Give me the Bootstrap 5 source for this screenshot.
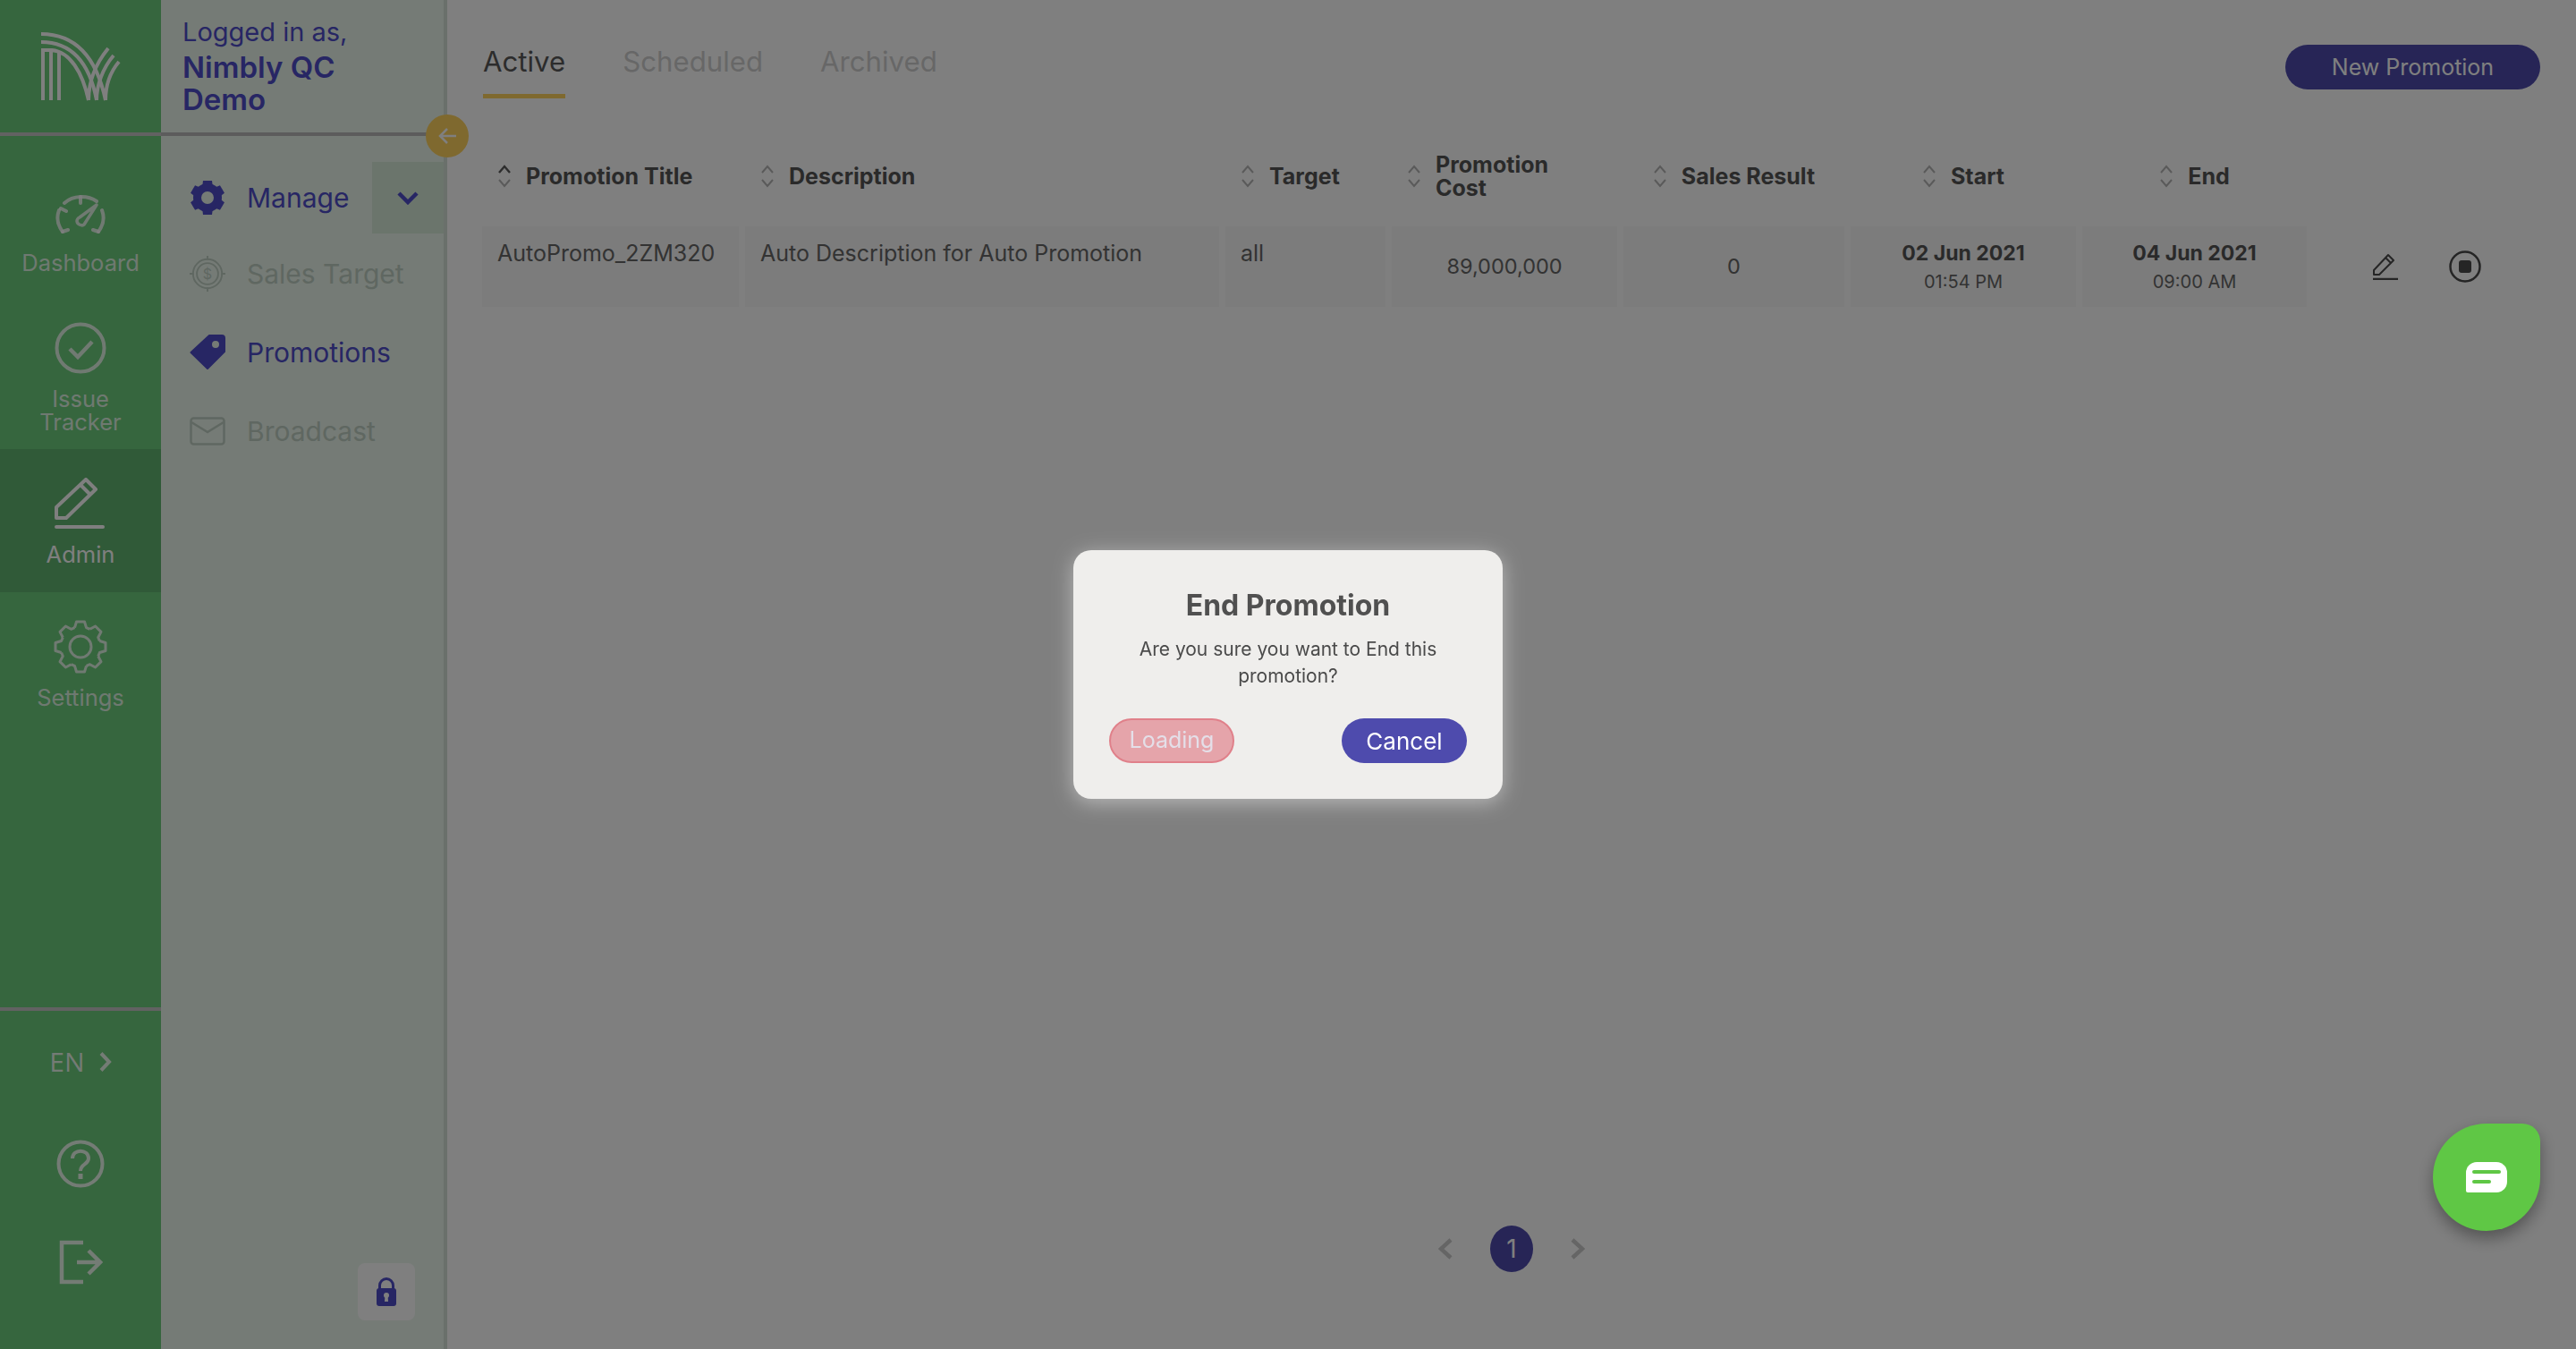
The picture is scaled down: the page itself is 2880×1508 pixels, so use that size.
<!DOCTYPE html>
<html lang="en">
<head>
    <meta charset="UTF-8">
    <meta name="viewport" content="width=device-width, initial-scale=1.0">
    <title>Promotions</title>
    <link href="https://cdn.jsdelivr.net/npm/bootstrap@5.3.0/dist/css/bootstrap.min.css" rel="stylesheet">
    <script src="https://cdn.jsdelivr.net/npm/bootstrap@5.3.0/dist/js/bootstrap.bundle.min.js"></script>
    <style>
        :root {
            --navy: #4e4cc8;
            --primary: #4e4bad;
            --green: #6ccc7c;
            --panel: #eaf6ec;
        }
        html, body { height: 100%; }
        body {
            font-family: "Inter", "Liberation Sans", sans-serif;
            background: #fff;
            overflow: hidden;
        }
        .app-shell { height: 1508px; }

        /* left green rail */
        .rail {
            width: 180px;
            background: var(--green);
            color: #fff;
        }
        .rail-head {
            height: 152px;
            border-bottom: 4px solid #c4c4c4;
        }
        .rail-item {
            height: 160px;
            padding-top: 30px;
            font-size: 25.5px;
            line-height: 26px;
            text-align: center;
            color: rgba(255, 255, 255, .8);
        }
        .rail-short { height: 152px; padding-top: 32px; margin-top: 28px; }
        .rail-tall { height: 170px; padding-top: 27px; }
        .rail-item.is-active { background: #60b470; color: #fff; }
        .rail-icon { height: 61px; margin-bottom: 14px; }
        .rail-short .rail-icon { height: 55px; }
        .rail-tall .rail-icon { height: 60px; }
        .rail-foot {
            height: 382px;
            border-top: 4px solid #c4c4c4;
            color: rgba(255, 255, 255, .85);
        }
        .lang-switch {
            font-family: "Open Sans", sans-serif;
            font-size: 30px;
            line-height: 40px;
            margin-top: 37px;
        }
        .help-ico { margin-top: 67px; }
        .exit-ico { margin-top: 58px; }

        /* second level panel */
        .side-panel {
            width: 320px;
            background: var(--panel);
            border-right: 4px solid #d4e0d6;
            color: var(--navy);
        }
        .panel-head {
            height: 152px;
            padding: 18px 20px 0 24px;
            border-bottom: 4px solid #b8b8b8;
        }
        .login-label { font-size: 29px; line-height: 36px; }
        .login-name { font-size: 33px; line-height: 36px; font-weight: 600; margin-top: 3px; }
        .panel-link {
            height: 88px;
            padding-left: 32px;
            font-size: 30px;
            gap: 24px;
        }
        .panel-link.is-off { color: #bfcfc3; }
        .panel-first { margin-top: 28px; height: 82px; }
        .panel-icon { width: 40px; flex: none; }
        .drop-box {
            width: 80px;
            height: 80px;
            background: #d6ead9;
            margin-left: auto;
        }
        .lock-box {
            width: 64px;
            height: 64px;
            background: #fff;
            border-radius: 8px;
            margin: auto 32px 32px auto;
        }
        .collapse-btn {
            position: absolute;
            left: 476px;
            top: 128px;
            width: 48px;
            height: 48px;
            border-radius: 50%;
            background: #ffd25e;
            color: #fff;
        }

        /* main area */
        .main-area { padding: 0 40px 86px 32px; min-width: 0; }
        .tab-row { height: 110px; padding-left: 8px; }
        .tab-link {
            font-size: 31.2px;
            line-height: 40px;
            color: #cfcfcf;
            padding: 49px 0 15px;
            margin-right: 64px;
            border-bottom: 5px solid transparent;
            text-decoration: none;
        }
        .tab-link.is-on { color: #585858; border-bottom-color: #ffd25e; }
        .btn-new {
            width: 285px;
            height: 50px;
            margin-top: 50px;
            padding: 2px 0 0;
            font-size: 25px;
            border: 0;
            border-radius: 25px;
            background: var(--primary);
            color: #fff;
        }
        .promo-table {
            table-layout: fixed;
            width: 2315px;
            margin-top: 31px;
            border-collapse: separate;
            border-spacing: 7px;
            color: #666;
        }
        .promo-table th {
            height: 98px;
            padding: 0 0 0 17px;
            font-size: 25px;
            line-height: 26px;
            font-weight: 700;
            color: #555;
            vertical-align: middle;
        }
        .promo-table th.is-mid { padding: 0; }
        .th-inner { display: flex; align-items: center; gap: 16px; }
        .is-mid .th-inner { justify-content: center; }
        .sort-ico { width: 16px; height: 26px; flex: none; color: #b4b4b4; }
        .promo-table td {
            height: 90px;
            padding: 0 0 0 17px;
            background: #f8f8f8;
            font-size: 25px;
            vertical-align: top;
            line-height: 60px;
            white-space: nowrap;
        }
        .promo-table td.is-mid { padding: 0; text-align: center; vertical-align: middle; line-height: 30px; font-size: 23.5px; }
        .promo-table td.no-fill { background: transparent; }
        .col-title { width: 287px; }
        .col-desc { width: 530px; }
        .col-target { width: 179px; }
        .col-cost { width: 252px; }
        .col-sales { width: 247px; }
        .col-start { width: 252px; }
        .col-end { width: 251px; }
        .date-main { font-size: 23px; font-weight: 700; color: #555; line-height: 34px; }
        .date-time { font-size: 20px; line-height: 30px; }
        .row-actions { gap: 56px; padding-left: 66px; height: 90px; color: #4a4a4a; }
        .pager { gap: 36px; padding-left: 8px; color: #cacaca; }
        .page-dot {
            width: 48px;
            height: 52px;
            border-radius: 50%;
            background: var(--primary);
            color: #fff;
            font-size: 28px;
            margin: 0 6px;
        }

        /* confirm dialog */
        .end-dialog { --bs-modal-width: 480px; }
        .end-dialog .modal-content {
            height: 278px;
            padding: 44px 40px 0;
            background: #efeeec;
            border: 0;
            border-radius: 20px;
            box-shadow: 0 4px 22px rgba(255, 255, 255, .45);
            text-align: center;
        }
        .end-title { font-size: 32px; line-height: 36px; font-weight: 700; color: #505050; margin: 0; }
        .end-text { font-size: 21px; line-height: 30px; color: #4a4a4a; margin: 16px 0 0; }
        .end-actions { margin-top: 32px; }
        .end-btn {
            width: 140px;
            height: 50px;
            padding: 0;
            font-size: 26px;
            border-radius: 25px;
        }
        .end-btn-load { background: #e5a4aa; border: 2px solid #e0808a; color: #e4dfe8; font-size: 25px; }
        .end-btn-load:disabled { background: #e5a4aa; border-color: #e0808a; color: #e4dfe8; opacity: 1; }
        .end-btn-cancel { background: var(--primary); border: 0; color: #fff; }

        .chat-bubble {
            position: fixed;
            left: 2720px;
            top: 1256px;
            width: 120px;
            height: 120px;
            border-radius: 60px 20px 60px 60px;
            background: #5fc745;
            box-shadow: 0 8px 18px rgba(0, 0, 0, .35);
            z-index: 1060;
        }
    </style>
</head>
<body>
    <svg width="0" height="0" class="position-absolute">
        <symbol id="ico-sort" viewBox="0 0 16 26">
            <path d="M2 9 8 2l6 7M2 17l6 7 6-7" fill="none" stroke="currentColor" stroke-width="2"/>
        </symbol>
        <symbol id="ico-sort-up" viewBox="0 0 16 26">
            <path d="M2 9 8 2l6 7" fill="none" stroke="#5a5a5a" stroke-width="2.4"/>
            <path d="M2 17l6 7 6-7" fill="none" stroke="currentColor" stroke-width="2"/>
        </symbol>
    </svg>

    <div class="app-shell d-flex">
        <!-- rail -->
        <aside class="rail d-flex flex-column flex-shrink-0">
            <div class="rail-head d-flex align-items-center justify-content-center">
                <svg width="90" height="78" viewBox="45 35 90 78" fill="none" stroke="#fff" stroke-width="4">
                    <path d="M46 38C85 38 108 65 118 112M46 47C80 47 100 70 108 112M46 56H58C78 58 92 80 99 112M48 56V112M57 56V112M66 58V112"/>
                    <path d="M99 112C99 90 108 70 121 54M108 112C108 95 115 76 127 62M118 112C118 98 122 82 133 69"/>
                </svg>
            </div>
            <a class="rail-item rail-short d-block text-decoration-none">
                <div class="rail-icon d-flex align-items-center justify-content-center">
                    <svg width="56" height="46" viewBox="0 0 56 46" fill="none" stroke="currentColor" stroke-width="4" stroke-linecap="round">
                        <path d="M8 42C2 34 1 26 4 18M48 42c6-8 7-16 4-24M10 10C20 1 36 1 46 8"/>
                        <path d="M28 3v7M6 16l6 3M8 42l6-2M48 42l-6-2"/>
                        <path d="M46 12 32 34c-2 2-8 0-8-4 0-2 1-3 3-4z" stroke-linejoin="round" stroke-width="3.5"/>
                    </svg>
                </div>
                Dashboard
            </a>
            <a class="rail-item rail-tall d-block text-decoration-none">
                <div class="rail-icon d-flex align-items-center justify-content-center">
                    <svg width="58" height="58" viewBox="0 0 58 58" fill="none" stroke="currentColor" stroke-width="4">
                        <circle cx="29" cy="29" r="26.5"/>
                        <path d="M17 30l9 9 16-17" stroke-width="4.5"/>
                    </svg>
                </div>
                Issue<br>Tracker
            </a>
            <a class="rail-item is-active d-block text-decoration-none">
                <div class="rail-icon d-flex align-items-center justify-content-center">
                    <svg width="58" height="58" viewBox="0 0 58 58" fill="none" stroke="currentColor" stroke-width="4">
                        <path d="M2 33 35 2l11 11-33 32H2zM29 8l11 11" stroke-linejoin="round"/>
                        <path d="M2 55h52" stroke-linecap="round"/>
                    </svg>
                </div>
                Admin
            </a>
            <a class="rail-item d-block text-decoration-none">
                <div class="rail-icon d-flex align-items-center justify-content-center">
                    <svg width="60" height="60" viewBox="0 0 60 60" fill="none" stroke="currentColor" stroke-width="3" stroke-linejoin="round">
                        <g id="gear-step"><path d="M23.5 8.6 25.5 2H34.5L36.5 8.6 40.5 10.3"/></g>
                        <use href="#gear-step" transform="rotate(45 30 30)"/>
                        <use href="#gear-step" transform="rotate(90 30 30)"/>
                        <use href="#gear-step" transform="rotate(135 30 30)"/>
                        <use href="#gear-step" transform="rotate(180 30 30)"/>
                        <use href="#gear-step" transform="rotate(225 30 30)"/>
                        <use href="#gear-step" transform="rotate(270 30 30)"/>
                        <use href="#gear-step" transform="rotate(315 30 30)"/>
                        <circle cx="30" cy="30" r="12"/>
                    </svg>
                </div>
                Settings
            </a>
            <div class="rail-foot mt-auto d-flex flex-column align-items-center">
                <div class="lang-switch d-flex align-items-center gap-3">
                    EN
                    <svg width="14" height="22" viewBox="0 0 14 22" fill="none" stroke="currentColor" stroke-width="4"><path d="M2 1.500 11 11l-9 9.500"/></svg>
                </div>
                <svg class="help-ico" width="54" height="54" viewBox="0 0 54 54" fill="none" stroke="currentColor" stroke-width="4">
                    <circle cx="27" cy="27" r="24.500"/>
                    <path d="M18 21c0-11 18-11 18 0 0 7-9 6-9 14"/>
                    <path d="M27 38v6" stroke-width="5"/>
                </svg>
                <svg class="exit-ico" width="50" height="50" viewBox="0 0 50 50" fill="none" stroke="currentColor" stroke-width="4.500">
                    <path d="M28 3H4v44h24"/>
                    <path d="M21 25h26M34 12l13 13-13 13"/>
                </svg>
            </div>
        </aside>

        <!-- second level menu -->
        <aside class="side-panel d-flex flex-column flex-shrink-0">
            <div class="panel-head">
                <div class="login-label">Logged in as,</div>
                <div class="login-name">Nimbly QC<br>Demo</div>
            </div>
            <div class="panel-link panel-first d-flex align-items-center">
                <svg class="panel-icon" height="40" viewBox="0 0 40 40" fill="currentColor">
                    <circle cx="20" cy="20" r="11.500" fill="none" stroke="currentColor" stroke-width="9"/>
                    <g id="cog-tooth"><path d="M15 1h10l1 8H14z"/></g>
                    <use href="#cog-tooth" transform="rotate(60 20 20)"/>
                    <use href="#cog-tooth" transform="rotate(120 20 20)"/>
                    <use href="#cog-tooth" transform="rotate(180 20 20)"/>
                    <use href="#cog-tooth" transform="rotate(240 20 20)"/>
                    <use href="#cog-tooth" transform="rotate(300 20 20)"/>
                </svg>
                <span>Manage</span>
                <div class="drop-box d-flex align-items-center justify-content-center">
                    <svg width="24" height="16" viewBox="0 0 24 16" fill="none" stroke="currentColor" stroke-width="4.500"><path d="M2 3l10 10L22 3"/></svg>
                </div>
            </div>
            <div class="panel-link is-off d-flex align-items-center">
                <svg class="panel-icon" height="42" viewBox="0 0 42 42" fill="none" stroke="currentColor" stroke-width="2">
                    <circle cx="21" cy="21" r="17"/>
                    <circle cx="21" cy="21" r="12.500"/>
                    <path d="M21 0v5M21 37v5M0 21h5M37 21h5"/>
                    <text x="21" y="27" text-anchor="middle" font-size="17" fill="currentColor" stroke="none">$</text>
                </svg>
                <span>Sales Target</span>
            </div>
            <div class="panel-link d-flex align-items-center">
                <svg class="panel-icon" height="40" viewBox="0 0 40 40">
                    <path d="M22 1H36a3 3 0 0 1 3 3V19L20 38 1.500 20z" fill="currentColor" stroke="currentColor" stroke-width="2" stroke-linejoin="round"/>
                    <circle cx="29" cy="11" r="4" fill="#eaf6ec"/>
                </svg>
                <span>Promotions</span>
            </div>
            <div class="panel-link is-off d-flex align-items-center">
                <svg class="panel-icon" height="32" viewBox="0 0 40 32" fill="none" stroke="currentColor" stroke-width="2.500">
                    <rect x="1.500" y="1.500" width="37" height="29" rx="3"/>
                    <path d="M2 6l18 11L38 6"/>
                </svg>
                <span>Broadcast</span>
            </div>
            <div class="lock-box d-flex align-items-center justify-content-center">
                <svg width="24" height="32" viewBox="0 0 24 32">
                    <path d="M4.500 14V9a7.500 7.500 0 0 1 15 0v5" fill="none" stroke="#4e4cc8" stroke-width="3"/>
                    <rect x="1" y="12" width="22" height="20" rx="3" fill="#4e4cc8"/>
                    <circle cx="12" cy="20" r="3" fill="#fff"/>
                    <path d="M10.500 20h3l.5 7h-4z" fill="#fff"/>
                </svg>
            </div>
        </aside>
        <div class="collapse-btn d-flex align-items-center justify-content-center">
            <svg width="20" height="18" viewBox="0 0 20 18" fill="none" stroke="currentColor" stroke-width="2.500"><path d="M20 9H2M10 1 2 9l8 8"/></svg>
        </div>

        <!-- content -->
        <main class="main-area flex-grow-1 d-flex flex-column">
            <div class="d-flex justify-content-between align-items-start">
                <nav class="tab-row d-flex">
                    <a class="tab-link is-on">Active</a>
                    <a class="tab-link">Scheduled</a>
                    <a class="tab-link">Archived</a>
                </nav>
                <button class="btn btn-new" type="button">New Promotion</button>
            </div>

            <table class="promo-table">
                <colgroup>
                    <col class="col-title"><col class="col-desc"><col class="col-target"><col class="col-cost"><col class="col-sales"><col class="col-start"><col class="col-end"><col>
                </colgroup>
                <thead>
                    <tr>
                        <th><div class="th-inner"><svg class="sort-ico"><use href="#ico-sort-up"/></svg>Promotion Title</div></th>
                        <th><div class="th-inner"><svg class="sort-ico"><use href="#ico-sort"/></svg>Description</div></th>
                        <th><div class="th-inner"><svg class="sort-ico"><use href="#ico-sort"/></svg>Target</div></th>
                        <th><div class="th-inner"><svg class="sort-ico"><use href="#ico-sort"/></svg><span>Promotion<br>Cost</span></div></th>
                        <th class="is-mid"><div class="th-inner"><svg class="sort-ico"><use href="#ico-sort"/></svg>Sales Result</div></th>
                        <th class="is-mid"><div class="th-inner"><svg class="sort-ico"><use href="#ico-sort"/></svg>Start</div></th>
                        <th class="is-mid"><div class="th-inner"><svg class="sort-ico"><use href="#ico-sort"/></svg>End</div></th>
                        <th></th>
                    </tr>
                </thead>
                <tbody>
                    <tr>
                        <td>AutoPromo_2ZM320</td>
                        <td>Auto Description for Auto Promotion</td>
                        <td>all</td>
                        <td class="is-mid">89,000,000</td>
                        <td class="is-mid">0</td>
                        <td class="is-mid"><div class="date-main">02 Jun 2021</div><div class="date-time">01:54 PM</div></td>
                        <td class="is-mid"><div class="date-main">04 Jun 2021</div><div class="date-time">09:00 AM</div></td>
                        <td class="no-fill is-mid">
                            <div class="row-actions d-flex align-items-center">
                                <svg width="30" height="30" viewBox="0 0 30 30" fill="none" stroke="currentColor" stroke-width="2">
                                    <path d="M2 19 18 2l6 6L8 24H2zM15 5l6 6" stroke-linejoin="round"/>
                                    <path d="M1 29h28" stroke-width="2.500"/>
                                </svg>
                                <svg width="36" height="36" viewBox="0 0 36 36">
                                    <circle cx="18" cy="18" r="16.500" fill="none" stroke="currentColor" stroke-width="2.500"/>
                                    <rect x="11" y="11" width="14" height="14" rx="3" fill="currentColor"/>
                                </svg>
                            </div>
                        </td>
                    </tr>
                </tbody>
            </table>

            <div class="pager mt-auto d-flex align-items-center justify-content-center">
                <svg width="16" height="24" viewBox="0 0 16 24" fill="none" stroke="currentColor" stroke-width="4.500"><path d="M14 2 3 12l11 10"/></svg>
                <div class="page-dot d-flex align-items-center justify-content-center">1</div>
                <svg width="16" height="24" viewBox="0 0 16 24" fill="none" stroke="currentColor" stroke-width="4.500"><path d="M2 2l11 10L2 22"/></svg>
            </div>
        </main>
    </div>

    <div class="modal-backdrop show"></div>

    <div class="modal d-block" tabindex="-1">
        <div class="modal-dialog modal-dialog-centered end-dialog">
            <div class="modal-content">
                <h5 class="end-title">End Promotion</h5>
                <p class="end-text">Are you sure you want to End this promotion?</p>
                <div class="end-actions d-flex justify-content-between">
                    <button class="btn end-btn end-btn-load" type="button" disabled>Loading</button>
                    <button class="btn end-btn end-btn-cancel" type="button">Cancel</button>
                </div>
            </div>
        </div>
    </div>

    <div class="chat-bubble d-flex align-items-center justify-content-center">
        <svg width="46" height="34" viewBox="0 0 46 34">
            <path d="M12 0H34a12 12 0 0 1 12 12V22A12 12 0 0 1 34 34H2a2 2 0 0 1-2-2V12A12 12 0 0 1 12 0z" fill="#fff"/>
            <rect x="7" y="9" width="32" height="4" rx="2" fill="#5fc745"/>
            <rect x="7" y="20" width="21" height="4" rx="2" fill="#5fc745"/>
        </svg>
    </div>
</body>
</html>
